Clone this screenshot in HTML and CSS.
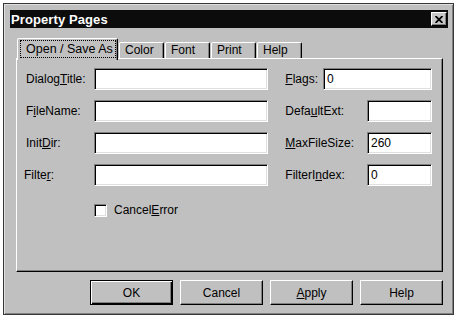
FILE: index.html
```html
<!DOCTYPE html>
<html>
<head>
<meta charset="utf-8">
<link rel="stylesheet" href="styles.css">
</head>
<body>
<div class="window">
  <div class="titlebar">
    <span class="title">Property Pages</span>
    <span class="close"><svg width="8" height="7" viewBox="0 0 8 7"><path d="M0.5 0 L7.5 7 M7.5 0 L0.5 7" stroke="#000" stroke-width="1.8" fill="none"/></svg></span>
  </div>
  <div class="tabs">
    <div class="tab active"><span class="focus">Open / Save As</span></div>
    <div class="tab">Color</div>
    <div class="tab">Font</div>
    <div class="tab">Print</div>
    <div class="tab">Help</div>
  </div>
  <div class="panel">
    <div class="form">
      <label class="lbl">Dialog<u>T</u>itle:</label>
      <input class="field c2" type="text" value="">
      <label class="lbl c4">&nbsp;<u>F</u>lags:</label>
      <input class="field c56" type="text" value="0">

      <label class="lbl">F<u>i</u>leName:</label>
      <input class="field c2" type="text" value="">
      <label class="lbl c45">&nbsp;Defa<u>u</u>ltExt:</label>
      <input class="field c6" type="text" value="">

      <label class="lbl">Init<u>D</u>ir:</label>
      <input class="field c2" type="text" value="">
      <label class="lbl c45">&nbsp;<u>M</u>axFileSize:</label>
      <input class="field c6" type="text" value="260">

      <label class="lbl lbl-filter">Filte<u>r</u>:</label>
      <input class="field c2" type="text" value="">
      <label class="lbl c45">&nbsp;FilterI<u>n</u>dex:</label>
      <input class="field c6" type="text" value="0">
    </div>
    <div class="checkrow">
      <span class="checkbox"></span>
      <span>Cancel<u>E</u>rror</span>
    </div>
  </div>
  <div class="buttons">
    <button class="btn default">OK</button>
    <button class="btn">Cancel</button>
    <button class="btn"><u>A</u>pply</button>
    <button class="btn">Help</button>
  </div>
</div>
</body>
</html>
```
FILE: styles.css
```css
* { box-sizing: border-box; }

body {
  margin: 0;
  background: #ffffff;
  font: 12px "Liberation Sans", Arial, sans-serif;
  color: #000;
}

.window {
  margin: 3px 0 0 3px;
  width: 451px;
  height: 312px;
  background: #c0c0c0;
  border: 1px solid #383838;
  box-shadow: inset 1px 1px #dfdfdf, inset -1px -1px #808080;
  padding: 6px 5px 0 6px;
  display: flex;
  flex-direction: column;
}

.titlebar {
  height: 18px;
  background: #0c0c0c;
  color: #fff;
  display: flex;
  align-items: center;
  justify-content: space-between;
  padding: 0 1px 0 1px;
}

.title {
  font-weight: bold;
  font-size: 13px;
  letter-spacing: 0.1px;
}

.close {
  width: 16px;
  height: 14px;
  background: #c8c8c8;
  border: 1px solid;
  border-color: #fff #000 #000 #fff;
  box-shadow: inset -1px -1px #808080;
  display: flex;
  align-items: center;
  justify-content: center;
}

.tabs {
  display: flex;
  align-items: flex-end;
  height: 20px;
  margin: 10px 0 0 7px;
  gap: 1px;
}

.tab {
  height: 16px;
  width: 45px;
  padding-left: 5px;
  line-height: 14px;
  border: 1px solid;
  border-bottom: none;
  border-color: #fff #000 transparent #fff;
  box-shadow: inset -1px 0 #808080;
  border-radius: 2px 2px 0 0;
  background: #c0c0c0;
}

.tab.active {
  position: relative;
  z-index: 1;
  width: 101px;
  height: 22px;
  margin-bottom: -2px;
  padding: 1px 0 0 2px;
}

.focus {
  display: block;
  width: 96px;
  height: 18px;
  line-height: 16px;
  padding-left: 5px;
  border: 1px dotted #000;
  font-size: 12.5px;
}

.panel {
  height: 214px;
  margin: 0 5px 0 6px;
  border: 1px solid;
  border-color: #fff #000 #000 #fff;
  box-shadow: inset -1px -1px #808080;
  padding: 9px 0 0 9px;
}

.form {
  display: grid;
  grid-template-columns: 68px 174px 15px 40px 44px 65px;
  grid-auto-rows: 22px;
  row-gap: 10px;
  align-items: center;
}

.lbl { grid-column: 1; }
.lbl-filter { margin-left: -2px; }
.c2 { grid-column: 2; }
.c4 { grid-column: 4; margin-left: -1px; }
.c45 { grid-column: 4 / 6; margin-left: -1px; }
.c56 { grid-column: 5 / 7; }
.c6 { grid-column: 6; }

.field {
  width: 100%;
  height: 22px;
  margin: 0;
  padding: 0 3px;
  font: inherit;
  color: #000;
  background: #fff;
  border: 1px solid;
  border-color: #808080 #fff #fff #808080;
  box-shadow: inset 1px 1px #000, inset -1px -1px #dfdfdf;
  outline: none;
}

.checkrow {
  display: flex;
  align-items: center;
  gap: 7px;
  margin: 17px 0 0 68px;
}

.checkbox {
  width: 13px;
  height: 13px;
  background: #fff;
  border: 1px solid;
  border-color: #808080 #fff #fff #808080;
  box-shadow: inset 1px 1px #000, inset -1px -1px #dfdfdf;
}

.buttons {
  display: flex;
  justify-content: flex-end;
  gap: 7px;
  margin-top: 8px;
  padding-right: 5px;
}

.btn {
  width: 83px;
  height: 25px;
  margin: 0;
  padding: 0;
  font: inherit;
  color: #000;
  background: #c0c0c0;
  border: 1px solid;
  border-color: #fff #000 #000 #fff;
  box-shadow: inset -1px -1px #808080;
}

.btn.default {
  border-color: #000;
  box-shadow: inset 1px 1px #fff, inset -1px -1px #000, inset -2px -2px #808080;
}
```
